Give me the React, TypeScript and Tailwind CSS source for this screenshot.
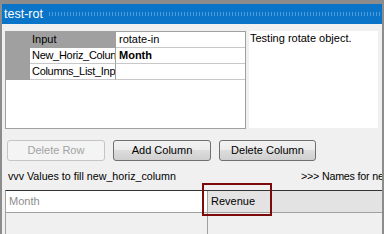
import React from "react";

export default function App() {
  const font = { fontFamily: '"Liberation Sans", Arial, sans-serif' };
  return (
    <div
      className="relative w-[384px] h-[234px] overflow-hidden bg-[#f0f0f0] border-t-4 border-l-2 border-r-2 border-[#8c8c8c] text-[11px] text-black"
      style={font}
    >
      {/* title bar */}
      <div className="h-[20px] bg-[#0a74c8] flex items-center pl-[2px] pr-[2px]">
        <span className="text-white text-[12.5px] leading-none">test-rot</span>
        <div className="ml-[5px] flex-1 h-[4px] bg-[radial-gradient(circle,#4f9ddb_0.7px,transparent_0.8px)] bg-[length:3px_2px]" />
      </div>

      {/* top panels */}
      <div className="flex pt-[7px] pl-[3px] pr-[2px] gap-[3px]">
        <div className="w-[241px] h-[98px] border border-[#a0a0a0] bg-white flex flex-col">
          <div className="flex h-[16px]">
            <div className="w-[24px] bg-[#a0a0a0]" />
            <div className="w-[86px] bg-[#a0a0a0] border-r border-b border-[#a0a0a0] pl-[2px] leading-[15px]">Input</div>
            <div className="flex-1 pl-[3px] leading-[15px] border-b border-[#c8c8c8]">rotate-in</div>
          </div>
          <div className="flex h-[16px]">
            <div className="w-[24px] bg-[#a0a0a0]" />
            <div className="w-[86px] border-r border-b border-r-[#a0a0a0] border-b-[#c8c8c8] pl-[2px] leading-[15px] whitespace-nowrap tracking-[-0.3px] overflow-hidden">New_Horiz_Colun</div>
            <div className="flex-1 pl-[3px] leading-[15px] font-bold border-b border-[#c8c8c8]">Month</div>
          </div>
          <div className="flex h-[16px]">
            <div className="w-[24px] bg-[#a0a0a0]" />
            <div className="w-[86px] border-r border-b border-r-[#a0a0a0] border-b-[#c8c8c8] pl-[2px] leading-[15px] whitespace-nowrap tracking-[-0.3px] overflow-hidden">Columns_List_Inp</div>
            <div className="flex-1 border-b border-[#c8c8c8]" />
          </div>
        </div>
        <div className="flex-1 h-[97px] bg-white pl-[1px] pt-[1px] leading-[13px] mr-[2px]">
          Testing rotate object.
        </div>
      </div>

      {/* buttons */}
      <div className="flex pl-[5px] mt-[11px] gap-[8px]">
        <div className="w-[98px] h-[21px] border border-[#c4c4c4] rounded-[3px] bg-[#f4f4f4] text-[#a3a3a3] flex items-center justify-center">
          Delete Row
        </div>
        <div className="w-[98px] h-[21px] border border-[#707070] rounded-[3px] bg-[linear-gradient(#f2f2f2,#ebebeb_50%,#dddddd_50%,#cfcfcf)] flex items-center justify-center">
          Add Column
        </div>
        <div className="w-[97px] h-[21px] border border-[#707070] rounded-[3px] bg-[linear-gradient(#f2f2f2,#ebebeb_50%,#dddddd_50%,#cfcfcf)] flex items-center justify-center">
          Delete Column
        </div>
      </div>

      {/* labels */}
      <div className="flex pl-[6px] mt-[8px] h-[14px] leading-[14px] whitespace-nowrap text-[10.7px]">
        <span className="w-[293px] shrink-0">vvv Values to fill new_horiz_column</span>
        <span className="shrink-0 tracking-[-0.2px]">&gt;&gt;&gt; Names for ne</span>
      </div>

      {/* bottom grid */}
      <div className="ml-[3px] mt-[7px] border-t border-l border-[#333] border-l-[#a0a0a0] h-[60px] flex flex-col">
        <div className="flex h-[22px] border-b border-[#a0a0a0]">
          <div className="w-[202px] bg-white border-r border-[#a0a0a0] pl-[3px] leading-[21px] text-[#8d8d8d]">Month</div>
          <div className="flex-1 bg-[#e3e3e3] pl-[3px] leading-[21px]">Revenue</div>
        </div>
        <div className="flex flex-1">
          <div className="w-[202px] border-r border-[#a0a0a0]" />
          <div className="flex-1" />
        </div>
      </div>

      {/* highlight box */}
      <div className="absolute left-[200px] top-[179px] w-[70px] h-[33px] border-2 border-[#7d0a0a]" />
    </div>
  );
}
